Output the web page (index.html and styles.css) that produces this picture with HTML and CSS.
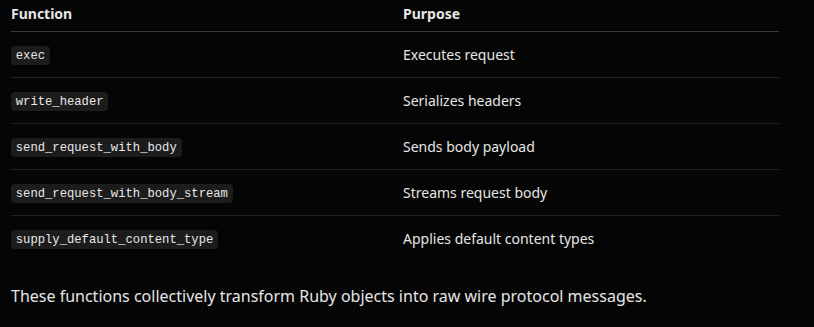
FILE: index.html
```html
<!DOCTYPE html>
<html>
<head>
<meta charset="utf-8">
<link rel="stylesheet" href="styles.css">
</head>
<body>
<div class="page">
  <table class="fn-table">
    <thead>
      <tr><th class="col-fn">Function</th><th>Purpose</th></tr>
    </thead>
    <tbody>
      <tr><td><code>exec</code></td><td>Executes request</td></tr>
      <tr><td><code>write_header</code></td><td>Serializes headers</td></tr>
      <tr><td><code>send_request_with_body</code></td><td>Sends body payload</td></tr>
      <tr><td><code>send_request_with_body_stream</code></td><td>Streams request body</td></tr>
      <tr><td><code>supply_default_content_type</code></td><td>Applies default content types</td></tr>
    </tbody>
  </table>
  <p class="note">These functions collectively transform Ruby objects into raw wire protocol messages.</p>
</div>
</body>
</html>
```

FILE: styles.css
```css
html, body {
  margin: 0;
  padding: 0;
  background: #050505;
}
body {
  font-family: "Noto Sans", "Open Sans", sans-serif;
  color: #e6e6e6;
  font-size: 14px;
}
.page {
  padding: 0 35px 0 11px;
}
.fn-table {
  width: 768px;
  border-collapse: collapse;
}
.fn-table th {
  text-align: left;
  font-weight: 700;
  font-size: 14px;
  line-height: 20px;
  padding: 4px 0 7px 0;
  border-bottom: 1px solid #3a3a3a;
}
.fn-table .col-fn {
  width: 392px;
}
.fn-table td {
  height: 45px;
  padding: 0;
  line-height: 20px;
  vertical-align: middle;
  border-bottom: 1px solid #222222;
}
.fn-table tbody tr:last-child td {
  border-bottom: none;
}
code {
  font-family: "Liberation Mono", monospace;
  font-size: 12.2px;
  background: #1c1c1c;
  color: #e8e8e8;
  padding: 2.6px 4.8px;
  border-radius: 4px;
}
.note {
  margin: 23px 0 0 0;
  font-size: 16px;
  line-height: 24px;
}
```
